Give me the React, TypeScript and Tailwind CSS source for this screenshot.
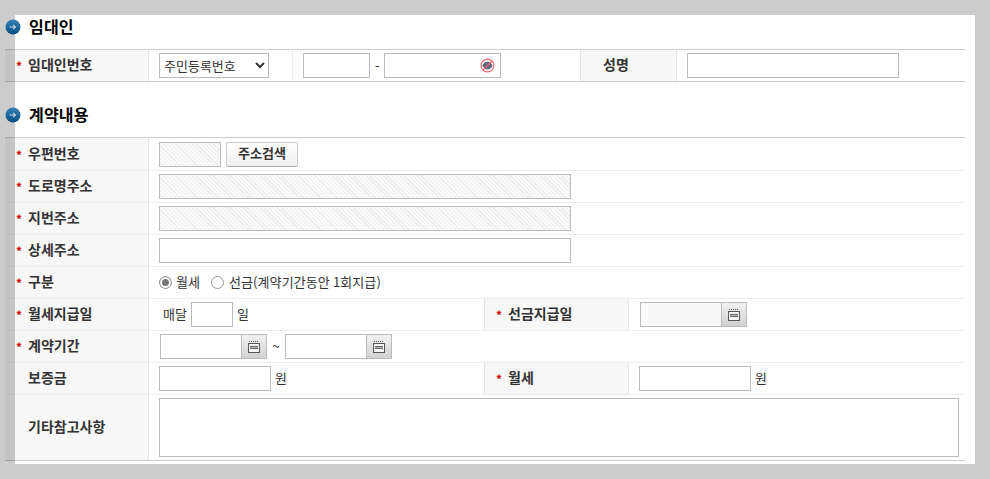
import React from 'react';

const field = 'h-[25px] border border-[#bbbbbb] bg-white text-[13px] text-[#333]';
const hatch =
  'h-[25px] border border-[#bbbbbb] bg-[repeating-linear-gradient(45deg,#fafafa,#fafafa_2px,#ececec_2px,#ececec_3px)]';
const radio =
  'size-[13px] appearance-none rounded-full border border-[#999999] bg-white checked:bg-[#777777] checked:shadow-[inset_0_0_0_2px_#ffffff]';

const SectionIcon = () => (
  <svg width="16" height="16" viewBox="0 0 16 16" className="shrink-0">
    <defs>
      <linearGradient id="dot" x1="0" y1="0" x2="0" y2="1">
        <stop offset="0" stopColor="#2f7fb5" />
        <stop offset="1" stopColor="#0f4f82" />
      </linearGradient>
    </defs>
    <circle cx="8" cy="8" r="7.5" fill="url(#dot)" />
    <path d="M4.5 8h6M8.2 5.8 10.4 8 8.2 10.2" fill="none" stroke="#c9dcea" strokeWidth="1.1" />
  </svg>
);

const EyeOff = () => (
  <svg width="15" height="15" viewBox="0 0 15 15" className="absolute left-[96px] top-[5px]">
    <circle cx="7.5" cy="7.5" r="6.4" fill="#fff" stroke="#f8626a" strokeWidth="1.1" />
    <path d="M2.2 7.5C3.7 4.9 5.5 3.6 7.5 3.6s3.8 1.3 5.3 3.9c-1.5 2.6-3.3 3.9-5.3 3.9s-3.8-1.3-5.3-3.9z" fill="#5f6c7a" />
    <path d="M12 3 3 12" stroke="#f8626a" strokeWidth="1.1" />
  </svg>
);

const CalendarButton = () => (
  <button className="flex h-[25px] w-[25px] items-center justify-center border border-l-0 border-[#bbbbbb] bg-gradient-to-b from-[#f2f2f2] to-[#d2d2d2]">
    <svg width="12" height="12" viewBox="0 0 12 12">
      <path d="M1 .5h10" stroke="#555" strokeDasharray="1 1" />
      <rect x=".5" y="2.5" width="11" height="9" fill="#f4f4f4" stroke="#555" />
      <path d="M2 5.5h8M2 7.5h8M3 5v3M5 5v3M7 5v3M9 5v3" stroke="#555" strokeWidth=".8" />
    </svg>
  </button>
);

const DateField = ({ bg = 'bg-white' }: { bg?: string }) => (
  <div className="flex">
    <input className={`h-[25px] w-[82px] border border-[#bbbbbb] ${bg}`} />
    <CalendarButton />
  </div>
);

const Label = ({ text, required = true, className = 'w-[144px]' }: { text: string; required?: boolean; className?: string }) => (
  <div className={`flex h-full shrink-0 items-center border-r border-black/[0.07] bg-black/[0.03] pb-[2px] pl-[11px] text-[14px] font-bold text-[#333] ${className}`}>
    <span className="w-[12px] pt-[3px] text-[12px] font-bold leading-none text-[#cc0000]">{required ? '*' : ''}</span>
    <span>{text}</span>
  </div>
);

const Row = ({ children, h = 'h-[32px]', line = 'border-black/[0.07]' }: { children: React.ReactNode; h?: string; line?: string }) => (
  <div className={`flex items-center border-b ${h} ${line}`}>{children}</div>
);

const Cell = ({ children, className = '' }: { children: React.ReactNode; className?: string }) => (
  <div className={`flex items-center pl-[10px] text-[13px] text-[#333] ${className}`}>{children}</div>
);

export default function App() {
  return (
    <div
      className="h-[479px] w-[990px] overflow-hidden bg-[#cccccc] pl-[15px] pt-[15px]"
      style={{ fontFamily: '"Noto Sans CJK KR", "Noto Sans", sans-serif' }}
    >
      <div className="h-[449px] w-[960px] bg-white">
        <div className="-ml-[10px] w-[960px]">
          <div className="flex h-[34px] items-center gap-[8px] pb-[10px] text-[16px] font-bold tracking-[0.2px] text-black">
            <SectionIcon />
            <h2 className="pb-[2px]">임대인</h2>
          </div>
          <div className="border-t border-black/20">
            <Row line="border-black/20">
              <Label text="임대인번호" />
              <Cell className="h-full w-[144px] border-r border-black/[0.07]">
                <select className={`${field} w-[110px]`}>
                  <option>주민등록번호</option>
                </select>
              </Cell>
              <Cell className="gap-[3px]">
                <input className={`${field} w-[67px]`} />
                <span className="w-[8px] pb-[2px] pl-[2px]">-</span>
                <div className="relative">
                  <input className={`${field} w-[117px]`} />
                  <EyeOff />
                </div>
              </Cell>
              <div className="ml-[79px] flex h-full w-[97px] items-center border-x border-black/[0.07] bg-black/[0.03] pb-[2px] pl-[22px] text-[14px] font-bold text-[#333]">
                성명
              </div>
              <Cell>
                <input className={`${field} w-[212px]`} />
              </Cell>
            </Row>
          </div>

          <div className="flex h-[55px] items-center gap-[8px] pt-[10px] text-[16px] font-bold tracking-[0.2px] text-black">
            <SectionIcon />
            <h2 className="pb-[2px]">계약내용</h2>
          </div>
          <div className="border-t border-black/20">
            <Row h="h-[33px]">
              <Label text="우편번호" />
              <Cell className="gap-[5px]">
                <div className={`${hatch} w-[62px]`} />
                <button className="h-[25px] w-[72px] rounded-[2px] border border-[#cccccc] border-b-[#aaaaaa] bg-gradient-to-b from-white to-[#eeeeee] pb-[3px] text-[13px] font-bold text-[#333]">
                  주소검색
                </button>
              </Cell>
            </Row>
            <Row>
              <Label text="도로명주소" />
              <Cell>
                <div className={`${hatch} w-[412px]`} />
              </Cell>
            </Row>
            <Row>
              <Label text="지번주소" />
              <Cell>
                <div className={`${hatch} w-[412px]`} />
              </Cell>
            </Row>
            <Row>
              <Label text="상세주소" />
              <Cell>
                <input className={`${field} w-[412px]`} />
              </Cell>
            </Row>
            <Row>
              <Label text="구분" />
              <Cell>
                <input type="radio" name="kind" defaultChecked className={radio} />
                <span className="ml-[4px] pb-[1px]">월세</span>
                <input type="radio" name="kind" className={`${radio} ml-[11px]`} />
                <span className="ml-[5px] pb-[1px] tracking-[0.1px]">선금(계약기간동안 1회지급)</span>
              </Cell>
            </Row>
            <Row>
              <Label text="월세지급일" />
              <Cell className="w-[335px]">
                <span className="ml-[4px] w-[28px] pb-[2px]">매달</span>
                <input className={`${field} w-[42px]`} />
                <span className="ml-[4px] pb-[2px]">일</span>
              </Cell>
              <Label text="선금지급일" className="w-[145px] border-l" />
              <Cell className="pl-[11px]">
                <DateField bg="bg-[#f9f9f9]" />
              </Cell>
            </Row>
            <Row>
              <Label text="계약기간" />
              <Cell className="pl-[11px]">
                <DateField />
                <span className="w-[18px] pb-[2px] text-center">~</span>
                <DateField />
              </Cell>
            </Row>
            <Row>
              <Label text="보증금" required={false} />
              <Cell className="w-[335px]">
                <input className={`${field} w-[112px]`} />
                <span className="ml-[4px] pb-[2px]">원</span>
              </Cell>
              <Label text="월세" className="w-[145px] border-l" />
              <Cell>
                <input className={`${field} w-[112px]`} />
                <span className="ml-[4px] pb-[2px]">원</span>
              </Cell>
            </Row>
            <Row h="h-[66px]" line="border-black/20">
              <Label text="기타참고사항" required={false} />
              <Cell>
                <textarea className="block h-[59px] w-[800px] resize-none border border-[#bbbbbb] bg-white" />
              </Cell>
            </Row>
          </div>
        </div>
      </div>
    </div>
  );
}
